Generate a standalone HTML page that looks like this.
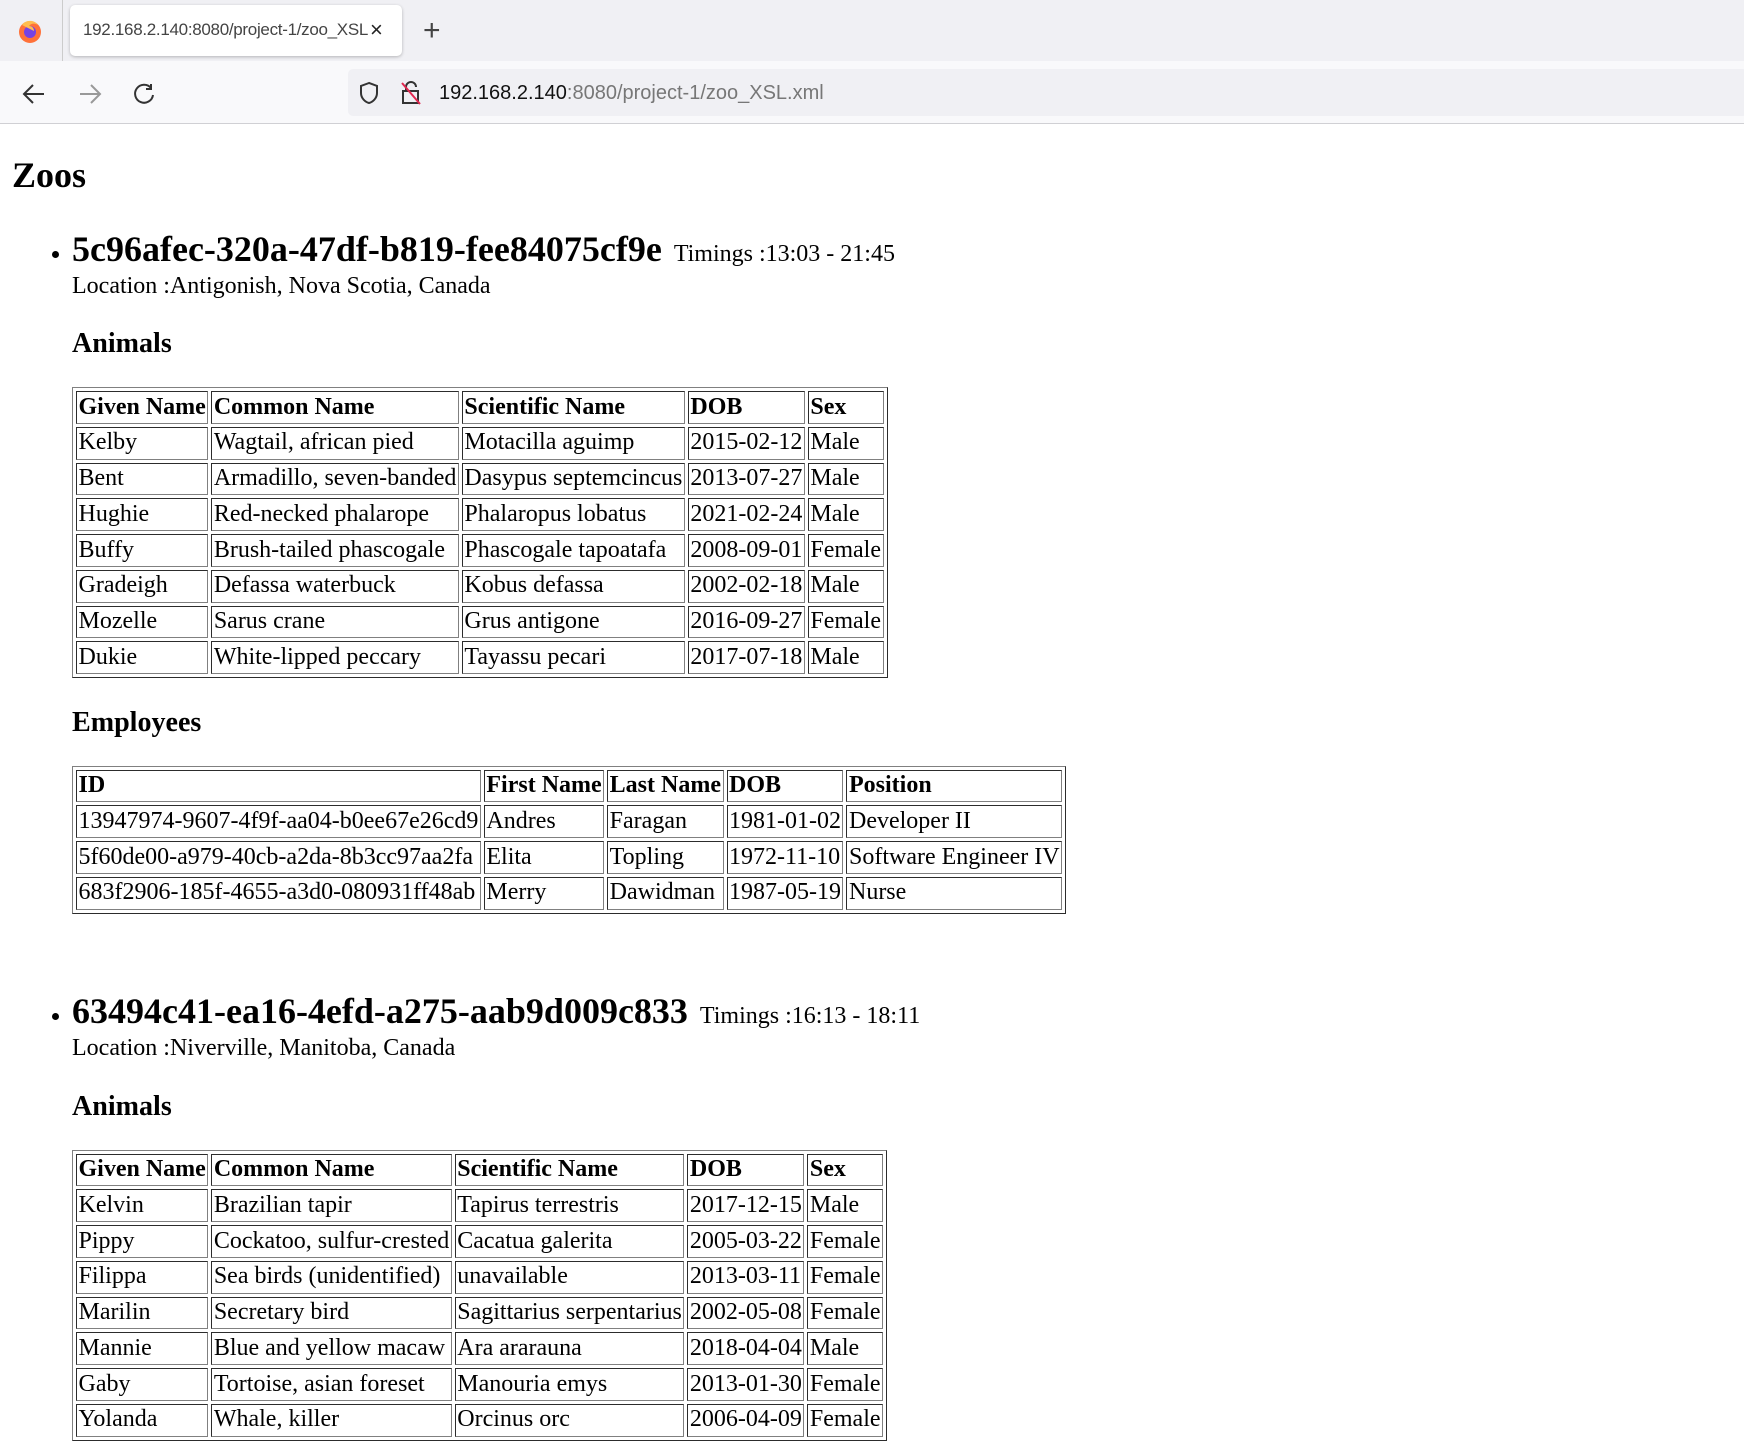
<!DOCTYPE html>
<html><head><meta charset="utf-8"><style>
html,body{margin:0;padding:0;width:1744px;height:1429px;overflow:hidden;background:#fff}
#tabs{position:absolute;left:0;top:0;width:1744px;height:61px;background:#f0f0f4}
#tab{position:absolute;left:70px;top:5px;width:332px;height:51px;background:#fff;border-radius:5px;box-shadow:0 1px 3px rgba(0,0,0,.25)}
#tab span{position:absolute;left:13px;top:15px;font:17px "Liberation Sans",sans-serif;color:#444;white-space:nowrap;width:285px;overflow:hidden;letter-spacing:-0.3px}
#tab b{position:absolute;left:300px;top:12px;font:400 22px "Liberation Sans",sans-serif;color:#222}
#plus{position:absolute;left:423px;top:14px;font:30px "Liberation Sans",sans-serif;color:#444}
#sep{position:absolute;left:62px;top:0;width:1px;height:61px;background:#ccc}
#nav{position:absolute;left:0;top:61px;width:1744px;height:62px;background:#f9f9fb;border-bottom:1px solid #d0d0d4}
#url{position:absolute;left:348px;top:8px;width:1400px;height:47px;background:#f0f0f4;border-radius:5px}
#url span{position:absolute;left:91px;top:13px;font:20px "Liberation Sans",sans-serif;color:#777;white-space:nowrap}
#url span i{font-style:normal;color:#111}
#content{position:absolute;left:0;top:82.67px;width:1162px;zoom:1.5;font-family:"Liberation Serif",serif;font-size:16px;color:#000}
#content h1{margin:20px 8px 0;font-size:24px}
ul{margin:21px 0 0;padding-left:48px}
.id{font-size:24px;font-weight:bold}
.loc{display:inline-block;margin-top:2px}
h3{margin:19px 0 18px;font-size:18.7px}
table{border-collapse:separate}
td,th{padding:1px;text-align:left;white-space:nowrap;line-height:18.5px}
</style></head><body>
<div id="tabs">
<svg style="position:absolute;left:16px;top:17px" width="28" height="28" viewBox="0 0 28 28"><circle cx="14" cy="15" r="11" fill="#ff7139"/><circle cx="14" cy="15" r="6" fill="#7542e5"/><path d="M6 8c3-5 12-6 16 0c-3-2-7-2-9 1c3 0 5 2 5 5" fill="#ffbd4f"/></svg>
<div id="sep"></div>
<div id="tab"><span>192.168.2.140:8080/project-1/zoo_XSL.xml</span><b>×</b></div>
<div id="plus">+</div>
</div>
<div id="nav">
<svg style="position:absolute;left:22px;top:22px" width="24" height="22" viewBox="0 0 24 22"><path d="M22 11H3M11 2L2 11l9 9" fill="none" stroke="#333" stroke-width="2"/></svg>
<svg style="position:absolute;left:78px;top:22px" width="24" height="22" viewBox="0 0 24 22"><path d="M2 11h19M13 2l9 9-9 9" fill="none" stroke="#999" stroke-width="2"/></svg>
<svg style="position:absolute;left:132px;top:21px" width="24" height="24" viewBox="0 0 24 24"><path d="M19 6A9 9 0 1 0 21 13M19 2v5h-5" fill="none" stroke="#333" stroke-width="2"/></svg>
<div id="url">
<svg style="position:absolute;left:10px;top:12px" width="22" height="24" viewBox="0 0 22 24"><path d="M11 2L3 5v7c0 5 4 9 8 10c4-1 8-5 8-10V5z" fill="none" stroke="#333" stroke-width="2"/></svg>
<svg style="position:absolute;left:52px;top:11px" width="22" height="26" viewBox="0 0 22 26"><rect x="3" y="11" width="15" height="12" fill="none" stroke="#333" stroke-width="2"/><path d="M6 11V7a5 5 0 0 1 10 0" fill="none" stroke="#333" stroke-width="2"/><path d="M2 3l18 21" stroke="#e22850" stroke-width="2"/></svg>
<span><i>192.168.2.140</i>:8080/project-1/zoo_XSL.xml</span>
</div>
</div>
<div id="content">
<h1>Zoos</h1>
<ul>
<li><span class="id">5c96afec-320a-47df-b819-fee84075cf9e</span> &nbsp;Timings :13:03 - 21:45<br><span class="loc">Location :Antigonish, Nova Scotia, Canada</span>
<h3>Animals</h3>
<table border="1"><tr><th>Given Name</th><th>Common Name</th><th>Scientific Name</th><th>DOB</th><th>Sex</th></tr>
<tr><td>Kelby</td><td>Wagtail, african pied</td><td>Motacilla aguimp</td><td>2015-02-12</td><td>Male</td></tr>
<tr><td>Bent</td><td>Armadillo, seven-banded</td><td>Dasypus septemcincus</td><td>2013-07-27</td><td>Male</td></tr>
<tr><td>Hughie</td><td>Red-necked phalarope</td><td>Phalaropus lobatus</td><td>2021-02-24</td><td>Male</td></tr>
<tr><td>Buffy</td><td>Brush-tailed phascogale</td><td>Phascogale tapoatafa</td><td>2008-09-01</td><td>Female</td></tr>
<tr><td>Gradeigh</td><td>Defassa waterbuck</td><td>Kobus defassa</td><td>2002-02-18</td><td>Male</td></tr>
<tr><td>Mozelle</td><td>Sarus crane</td><td>Grus antigone</td><td>2016-09-27</td><td>Female</td></tr>
<tr><td>Dukie</td><td>White-lipped peccary</td><td>Tayassu pecari</td><td>2017-07-18</td><td>Male</td></tr></table>
<h3>Employees</h3>
<table border="1"><tr><th>ID</th><th>First Name</th><th>Last Name</th><th>DOB</th><th>Position</th></tr>
<tr><td>13947974-9607-4f9f-aa04-b0ee67e26cd9</td><td>Andres</td><td>Faragan</td><td>1981-01-02</td><td>Developer II</td></tr>
<tr><td>5f60de00-a979-40cb-a2da-8b3cc97aa2fa</td><td>Elita</td><td>Topling</td><td>1972-11-10</td><td>Software Engineer IV</td></tr>
<tr><td>683f2906-185f-4655-a3d0-080931ff48ab</td><td>Merry</td><td>Dawidman</td><td>1987-05-19</td><td>Nurse</td></tr></table>
<div style="height:51px"></div></li>
<li><span class="id">63494c41-ea16-4efd-a275-aab9d009c833</span> &nbsp;Timings :16:13 - 18:11<br><span class="loc">Location :Niverville, Manitoba, Canada</span>
<h3>Animals</h3>
<table border="1"><tr><th>Given Name</th><th>Common Name</th><th>Scientific Name</th><th>DOB</th><th>Sex</th></tr>
<tr><td>Kelvin</td><td>Brazilian tapir</td><td>Tapirus terrestris</td><td>2017-12-15</td><td>Male</td></tr>
<tr><td>Pippy</td><td>Cockatoo, sulfur-crested</td><td>Cacatua galerita</td><td>2005-03-22</td><td>Female</td></tr>
<tr><td>Filippa</td><td>Sea birds (unidentified)</td><td>unavailable</td><td>2013-03-11</td><td>Female</td></tr>
<tr><td>Marilin</td><td>Secretary bird</td><td>Sagittarius serpentarius</td><td>2002-05-08</td><td>Female</td></tr>
<tr><td>Mannie</td><td>Blue and yellow macaw</td><td>Ara ararauna</td><td>2018-04-04</td><td>Male</td></tr>
<tr><td>Gaby</td><td>Tortoise, asian foreset</td><td>Manouria emys</td><td>2013-01-30</td><td>Female</td></tr>
<tr><td>Yolanda</td><td>Whale, killer</td><td>Orcinus orc</td><td>2006-04-09</td><td>Female</td></tr></table>
</li></ul>
</div>
</body></html>
